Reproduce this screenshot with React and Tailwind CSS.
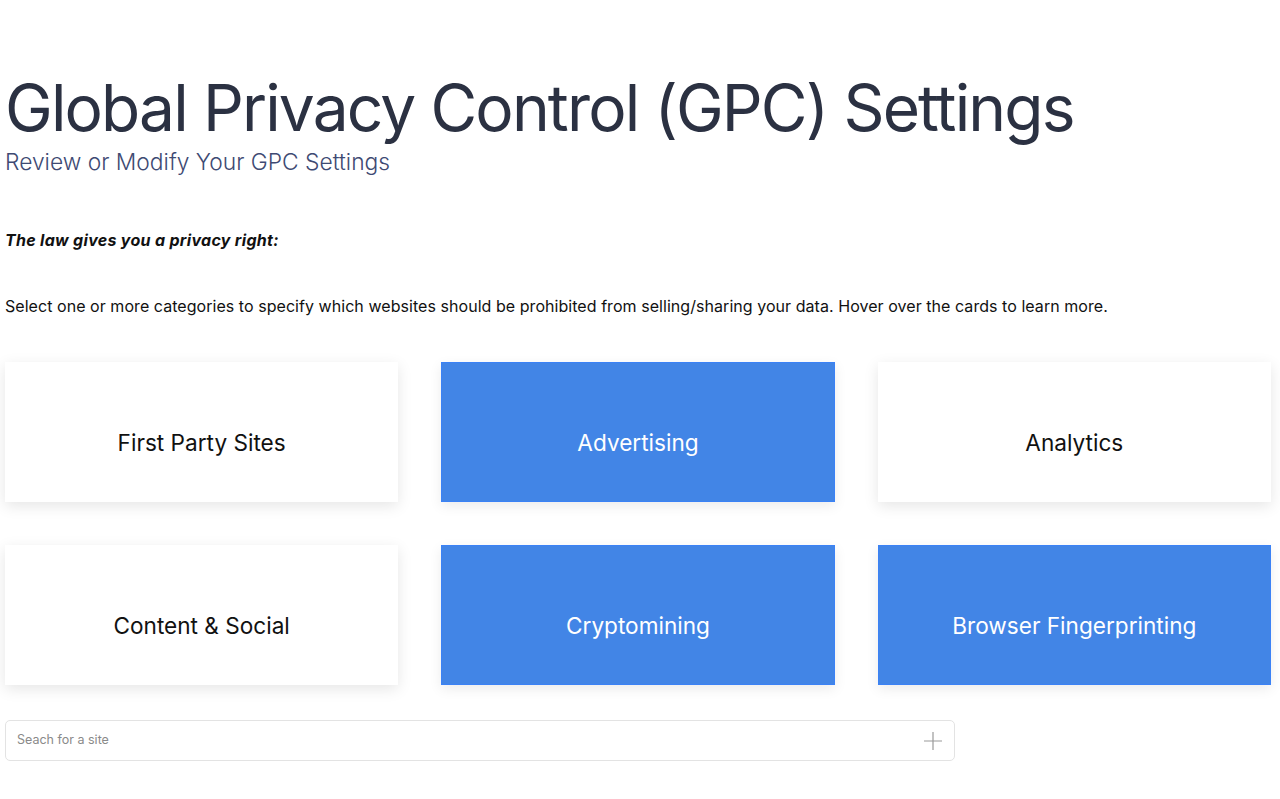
import React from 'react'

const cards = [
  { label: 'First Party Sites', on: false },
  { label: 'Advertising', on: true },
  { label: 'Analytics', on: false },
  { label: 'Content & Social', on: false },
  { label: 'Cryptomining', on: true },
  { label: 'Browser Fingerprinting', on: true },
]

export default function App() {
  return (
    <div className="min-h-screen bg-white font-['Inter',sans-serif] text-black">
      <div className="pl-[5px] pr-[9px] pt-[68px]">
        <h1 className="text-[64px] leading-[80px] font-normal tracking-[-1.85px] text-[#2b3142]">
          Global Privacy Control (GPC) Settings
        </h1>
        <h2 className="text-[22.8px] leading-[28px] font-light text-[#3e4a73]">
          Review or Modify Your GPC Settings
        </h2>

        <p className="mt-[52px] text-[16px] font-bold italic tracking-[0.3px] text-[#111]">
          The law gives you a privacy right:
        </p>
        <p className="mt-[42px] text-[16px] tracking-[0.05px] text-[#111]">
          Select one or more categories to specify which websites should be prohibited from selling/sharing your data. Hover over the cards to learn more.
        </p>

        <div className="mt-[44px] grid grid-cols-3 gap-x-[43px] gap-y-[43px]">
          {cards.map((c) => (
            <div
              key={c.label}
              className={
                c.on
                  ? 'h-[140px] pt-[22px] flex items-center justify-center bg-[#4285e6] border border-[#3b82f6] shadow-[0_4px_12px_rgba(0,0,0,0.08)] text-white text-[22.6px]'
                  : 'h-[140px] pt-[22px] flex items-center justify-center bg-white shadow-[0_4px_14px_rgba(0,0,0,0.1)] text-[#111] text-[22.6px]'
              }
            >
              {c.label}
            </div>
          ))}
        </div>

        <div className="mt-[35px] w-[950px] h-[41px] flex items-center justify-between border border-[#e3e3e3] rounded-[5px] pl-[11px] pr-[11px]">
          <span className="text-[12.5px] text-[#8a8a8a]">Seach for a site</span>
          <svg width="20" height="20" viewBox="0 0 20 20" className="text-[#9a9a9a]">
            <path d="M10 1v18M1 10h18" stroke="currentColor" strokeWidth="1.2" fill="none" />
          </svg>
        </div>
      </div>
    </div>
  )
}
